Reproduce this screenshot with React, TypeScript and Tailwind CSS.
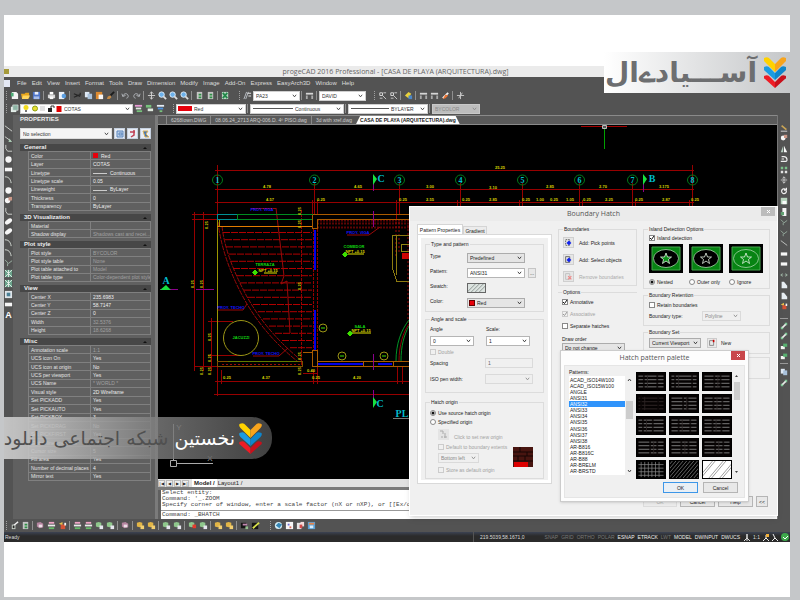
import React from 'react';

type Prop = [name: string, value: string, dim?: boolean];

interface ISection {
  title: string;
  height: string;
  rows: Prop[];
}

const sections: ISection[] = [
  {
    title: 'General',
    height: 'h-[60px]',
    rows: [
      ['Color', 'Red'],
      ['Layer', 'COTAS'],
      ['Linetype', 'Continuous'],
      ['Linetype scale', '0.05'],
      ['Lineweight', 'ByLayer'],
      ['Thickness', '0'],
      ['Transparency', 'ByLayer'],
    ],
  },
  {
    title: '3D Visualization',
    height: 'h-[17px]',
    rows: [
      ['Material', ''],
      ['Shadow display', 'Shadows cast and recei...', true],
    ],
  },
  {
    title: 'Plot style',
    height: 'h-[34px]',
    rows: [
      ['Plot style', 'BYCOLOR', true],
      ['Plot style table', 'None', true],
      ['Plot table attached to', 'Model', true],
      ['Plot table type', 'Color-dependent plot style', true],
    ],
  },
  {
    title: 'View',
    height: 'h-[43px]',
    rows: [
      ['Center X', '235.6983'],
      ['Center Y', '58.7147'],
      ['Center Z', '0'],
      ['Width', '32.5376', true],
      ['Height', '18.6268', true],
    ],
  },
  {
    title: 'Misc',
    height: 'h-[136px]',
    rows: [
      ['Annotation scale', '1:1', true],
      ['UCS icon On', 'Yes'],
      ['UCS icon at origin', 'No'],
      ['UCS per viewport', 'Yes'],
      ['UCS Name', '* WORLD *', true],
      ['Visual style', '2D Wireframe'],
      ['Set PICKADD', 'Yes'],
      ['Set PICKAUTO', 'Yes'],
      ['Set PICKBOX', '3'],
      ['Set PICKDRAG', 'No'],
      ['Set PICKFIRST', 'Yes'],
      ['Global linetype scale', '0.5'],
      ['Cursor size', '5'],
      ['Fill area', 'Yes'],
      ['Number of decimal places', '4'],
      ['Mirror text', 'Yes'],
    ],
  },
];

const menus = [
  'File', 'Edit', 'View', 'Insert', 'Format', 'Tools', 'Draw', 'Dimension',
  'Modify', 'Image', 'Add-On', 'Express', 'EasyArch3D', 'Window', 'Help',
];

const shapes: Record<string, React.ReactNode> = {
  page: (<><path d="M2 1h5l2 2v6H2z" fill="#f4f4f4" /><path d="M1 2h3v4H1z" fill="#4fae78" /></>),
  folder: (<><path d="M0 3h4l1-1h4v6H1z" fill="#e6a51c" /><path d="M2 5h8l-2 4H1z" fill="#ffd65e" /></>),
  disk: (<><path d="M1 1h8v8H1z" fill="#4d74c9" /><path d="M3 1h4v3H3z" fill="#e9eefb" /><path d="M2 6h6v3H2z" fill="#a8bdea" /></>),
  print: (<><path d="M3 1h4v3H3z" fill="#fff" /><path d="M1 4h8v4H1z" fill="#d5d5d5" /><path d="M3 6h4v3H3z" fill="#fafafa" /></>),
  preview: (<><path d="M1 1h6v8H1z" fill="#eaf1fa" /><circle cx="6.500" cy="5.500" r="2.500" fill="#5b9ee0" /></>),
  cut: (<path d="M1 3l7 3M1 7l7-3M8 2v3" stroke="#262626" strokeWidth="1.300" fill="none" />),
  copy: (<><path d="M1 1h5v6H1z" fill="#dfe9f5" /><path d="M4 3h5v6H4z" fill="#a9c2dc" /></>),
  paste: (<><path d="M1 1h7v8H1z" fill="#dd8a30" /><path d="M4 4h5v5H4z" fill="#f6f6f6" /></>),
  brush: (<><path d="M9 1L5 5" stroke="#1c1c1c" strokeWidth="2" /><path d="M1 9l1-3 3-1 1 2-2 2z" fill="#c78b45" /></>),
  undo: (<path d="M2 6c1-4 6-4 6 0 0 1-1 2-2 2M1 3l1 3 3-1" stroke="#b5b9be" fill="none" />),
  redo: (<path d="M8 6C7 2 2 2 2 6c0 1 1 2 2 2M9 3L8 6 5 5" stroke="#b5b9be" fill="none" />),
  pan: (<path d="M5 1v8M1 5h8M3 3l2-2 2 2M3 7l2 2 2-2" stroke="#d5d5d5" fill="none" />),
  zoom: (<><circle cx="4" cy="4" r="3" fill="#6db1ea" stroke="#e9f4ff" /><path d="M6 6l3 3" stroke="#dcdcdc" strokeWidth="2" /></>),
  tree: (<><path d="M2 1h6v8H2z" fill="#c5c5c5" /><path d="M4 3h3v2H4zM4 6h3v2H4z" fill="#2f9146" /></>),
  sheet: (<><path d="M1 1h7v8H1z" fill="#b9d6c2" /><path d="M2 2l5 6M7 2L2 8" stroke="#23884a" strokeWidth="2" /></>),
  style: (<><path d="M1 9l3-8M3 9l3-8" stroke="#bfc5cb" /><path d="M5 2h4v1H5zM6 5h3v1H6z" fill="#e3e3e3" /></>),
  ruler: (<><path d="M1 2h8v2H1z" fill="#d5d5d5" /><path d="M1 5h2v4H1zM7 5h2v4H7z" fill="#aaa" /></>),
  osnap: (<><path d="M2 2h3v3H2z" fill="none" stroke="#e0e0e0" /><path d="M5 5l4 4M6 2h3M2 8h3" stroke="#cfcfcf" /></>),
  gold: (<><path d="M1 5l4-4 3 2-3 5z" fill="#ead23b" /><path d="M5 5h4v4H5z" fill="#4c86c6" /></>),
  orange: (<><path d="M2 8l6-6" stroke="#f1f1f1" strokeWidth="2" /><path d="M5 4l3 1-3 3-3 1z" fill="#e87333" /></>),
  plus: (<path d="M5 1v8M1 5h8M3 8l4-6" stroke="#cbcbcb" fill="none" />),
  layers: (<><path d="M1 3h6v6H1z" fill="#e3eee9" /><path d="M3 1h6v6H3z" fill="#8fb6a6" stroke="#eee" strokeWidth=".600" /></>),
  layerPink: (<><path d="M1 1h8v2H1z" fill="#e79bd5" /><path d="M2 4h6v2H2z" fill="#dfe9df" /><path d="M3 7h6v2H3z" fill="#78c27d" /></>),
  layerGreen: (<><path d="M1 1h6v3H1z" fill="#78c27d" /><path d="M3 5h6v3H3z" fill="#dfe9df" /></>),
  layerBlue: (<><path d="M1 1h8v2H1z" fill="#e5ecf5" /><path d="M2 4h6v2H2z" fill="#4d91dc" /><path d="M4 7h3v2H4z" fill="#78c27d" /></>),
  solid: (<><path d="M1 2l3-1 3 1v4L4 7 1 6z" fill="#8fc78c" /><path d="M5 5h4v4H5z" fill="#e6e6ee" /></>),
  solidGold: (<><path d="M1 2l3-1 3 1v4L4 7 1 6z" fill="#e2b546" /><path d="M5 5h4v4H5z" fill="#f3cf70" /></>),
  solidPink: (<><path d="M1 2l4-1 3 2v4L4 8 1 6z" fill="#b4849f" /><path d="M3 4h4v3H3z" fill="#ecdfe6" /></>),
  solidRed: (<><path d="M1 2l3-1 3 1v4L4 7 1 6z" fill="#8fc78c" /><path d="M5 4h4v4H5z" fill="#e43b2e" /></>),
  bars: (<><path d="M2 1h6v2H2z" fill="#f0a6c7" /><path d="M1 4h8v2H1z" fill="#ebebeb" /><path d="M2 7h6v2H2z" fill="#68bb6a" /></>),
  check: (<><path d="M2 4h4v5H2z" fill="#cfd8cf" /><path d="M4 5l5-4" stroke="#eee" strokeWidth="1.500" /><path d="M3 5h2v3H3z" fill="#2b2b2b" /></>),
  dark: (<><path d="M1 2h6v6H1z" fill="#151515" /><path d="M3 3h5v2H3z" fill="#c187b0" /><path d="M6 6h3v3H6z" fill="#93bf8d" /></>),
  wand: (<><path d="M1 2h7v7H1z" fill="#151515" /><path d="M2 8l7-6" stroke="#d7e04b" strokeWidth="2" /></>),
  globe: (<><circle cx="5" cy="5" r="4" fill="#d5edf5" /><path d="M2 5l3-3 4 2-3 4z" fill="#3586b5" /></>),
  calendar: (<><path d="M1 1h8v8H1z" fill="#f7f7f7" /><path d="M3 3h2v2H3z" fill="#6b6bd8" /><path d="M5 6h2v2H5z" fill="#dd6655" /></>),
  redPage: (<><path d="M1 2h5v7H1z" fill="#e6e6e6" /><path d="M5 1h4v5H5z" fill="#f4dcdc" /><path d="M4 4h3v4H4z" fill="#d34a4a" /></>),
  help: (<><path d="M1 1h8v8H1z" fill="#5ba0d4" /><path d="M2 2h6v2H2z" fill="#e8854b" /><path d="M3 5h4v3H3z" fill="#d9ecfb" /></>),
  line: (<path d="M1 2l8 6" stroke="#d5d8d5" />),
  arrow: (<><path d="M1 3l7 5" stroke="#d5d8d5" /><path d="M6 5l3 4H5z" fill="#aac9b3" /></>),
  poly: (<path d="M2 1v4l2 3h5" stroke="#d5d8d5" fill="none" />),
  disc: (<circle cx="5" cy="5" r="3.500" fill="#f6f6f6" />),
  rect: (<path d="M1 3h8v4H1z" fill="#f6f6f6" />),
  arc: (<path d="M1 2c4 0 6 2 7 7" stroke="#dfe5df" fill="none" />),
  revcloud: (<><circle cx="4" cy="5" r="3" fill="#f6f6f6" /><path d="M5 1h4v4H5z" fill="#c99686" /></>),
  ellipse: (<ellipse cx="5" cy="5" rx="4.500" ry="2.500" fill="#f6f6f6" transform="rotate(-35 5 5)" />),
  hatch: (<><path d="M1 1h8v8H1z" fill="#6aa38b" /><path d="M1 1l8 8M9 1L1 9M5 1v8" stroke="#e5efe9" /></>),
  table: (<><path d="M1 1h8v8H1z" fill="#dfe5ea" /><path d="M3 3h4v4H3z" fill="#4b8096" /></>),
  pencil: (<><path d="M1 9h8" stroke="#eee" /><path d="M2 2l6 5" stroke="#c9a455" strokeWidth="2" /></>),
  mirror: (<><path d="M5 1l4 8H5z" fill="#fafafa" /><path d="M4 1v8H1z" fill="#b5cdbf" /></>),
  offset: (<path d="M1 8h6c3 0 2-6-2-6H2M2 5h3" stroke="#f0f0f0" strokeWidth="1.500" fill="none" />),
  array: (<><path d="M1 1h3v3H1zM6 1h3v3H6z" fill="#7cc08a" /><path d="M1 6h3v3H1zM6 6h3v3H6z" fill="#e3e3e3" /></>),
  rotate: (<path d="M8 5a3 3 0 1 1-1-2M8 1v3H5" stroke="#f0f0f0" strokeWidth="1.500" fill="none" />),
  scale: (<><path d="M1 1h8v8H1z" fill="#b7d4be" /><path d="M3 5h5v4H3z" fill="#fafafa" /></>),
  stretch: (<><path d="M3 0h5v10H3z" fill="#f4f4f4" /><path d="M1 5h4v4H1z" fill="#5f9e70" /></>),
  trim: (<path d="M1 2l4 4 4-3M4 6v3" stroke="#9fb8a8" fill="none" />),
  join: (<path d="M1 5h3M6 5h3M3 3L1 5l2 2M7 3l2 2-2 2" stroke="#a9c2b0" fill="none" />),
  chamfer: (<path d="M2 1h3l4 5v3H2z" fill="#e7edf2" />),
  bomb: (<><path d="M1 3l4-2v4z" fill="#e7c04c" /><path d="M3 4h5v5H3z" fill="#d55335" /><path d="M7 2h2v3H7z" fill="#f6f6f6" /></>),
  nodes: (<><path d="M1 6h3v3H1zM6 1h3v3H6z" fill="#7fc796" /><path d="M3 7l4-4" stroke="#e9e9e9" strokeWidth="2" /></>),
  front: (<><path d="M1 5h5v4H1z" fill="#f4f4f4" /><path d="M4 2h5v4H4z" fill="#58b070" /></>),
};

const Glyph: React.FC<{ name: string; size?: string }> = ({ name, size = 'size-[10px]' }) => {
  if (name === 'A') {
    return <span className="text-[9px] leading-[10px] font-bold text-white">A</span>;
  }
  return (
    <svg viewBox="0 0 10 10" className={`${size} shrink-0`} aria-hidden="true">
      {shapes[name]}
    </svg>
  );
};

const Sep = () => <span className="mx-px h-[9px] w-[2px] shrink-0 border-l border-[#8f8f8f]" />;
const Grip = () => <span className="mx-[2px] h-[9px] w-px shrink-0 border-l border-dotted border-[#a0a0a0]" />;

const IconStrip: React.FC<{ items: string[] }> = ({ items }) => (
  <>
    {items.map((name, i) => {
      if (name === '|') return <Sep key={i} />;
      if (name === ':') return <Grip key={i} />;
      return (
        <button key={i} aria-label={name} className="flex h-[11px] w-[11px] shrink-0 items-center justify-center">
          <Glyph name={name} size="size-[9px]" />
        </button>
      );
    })}
  </>
);

interface IPicker {
  label: string;
  value: string;
  className: string;
  disabled?: boolean;
  lead?: React.ReactNode;
}

const Picker: React.FC<IPicker> = ({ label, value, className, disabled, lead }) => (
  <span className={`relative flex h-[10px] shrink-0 items-center overflow-hidden border ${className}`}>
    {lead}
    <select
      aria-label={label}
      disabled={disabled}
      className="h-full min-w-0 flex-1 appearance-none bg-transparent pl-[2px] text-[5px] leading-[8px] outline-none"
    >
      <option>{value}</option>
    </select>
    <svg viewBox="0 0 6 4" className="mr-[2px] h-1 w-[5px] shrink-0">
      <path d="M1 .5l2 2.500 2-2.500" fill="none" stroke="currentColor" />
    </svg>
  </span>
);

const barPicker = 'border-[#cfcfcf] bg-white text-[#333]';
const greyPicker = 'border-[#acacac] bg-[#e5e5e5] text-[#222]';
const whitePicker = 'border-[#b5b5b5] bg-white text-[#222]';
const offPicker = 'border-[#dadada] bg-[#efefef] text-[#888]';

const PropertiesPanel = () => (
  <aside className="flex w-[142px] shrink-0 flex-col bg-[#606060] pr-1 pl-[7px]">
    <h2 className="text-[6px] leading-[9px] font-bold text-[#eee]">PROPERTIES</h2>
    <div className="mt-1 mb-[5px] flex items-center gap-[2px]">
      <Picker label="Selection" value="No selection" className="h-[11px] flex-1 border-[#ddd] bg-[#f5f5f5] text-[#333]" />
      {['table', 'arrow', 'gold'].map((name, i) => (
        <button key={name} aria-label={name} className="flex h-[11px] w-[11px] items-center justify-center border border-[#c5d0df] bg-[#e8edf5]">
          <svg viewBox="0 0 8 8" className="size-2">
            {i === 0 && <path d="M1 1h6v6H1zM3 3h3v2H3z" stroke="#5b86bd" fill="#bed1ea" />}
            {i === 1 && <path d="M5 0v5l-3 2M1 2h5" stroke="#c04055" strokeWidth="1.500" fill="none" />}
            {i === 2 && <path d="M1 1h5L4 4l3 3H3z" fill="#4577b2" stroke="#dbb25a" />}
          </svg>
        </button>
      ))}
    </div>
    <div className="flex flex-col gap-[3px]">
      {sections.map(({ title, height, rows }) => (
        <section key={title}>
          <h3 className="flex h-[7px] items-center justify-between bg-[#474747] px-1 text-[6px] leading-[7px] font-bold text-[#eee]">
            {title}
            <svg viewBox="0 0 4 4" className="size-1"><path d="M0 3l2-2 2 2z" fill="#111" /></svg>
          </h3>
          <table className={`ml-2 w-[123px] table-fixed border-collapse text-[5px] leading-[6px] ${height}`}>
            <tbody>
              {rows.map(([name, value, dim]) => (
                <tr key={name} className="border border-[#808080]">
                  <th scope="row" className="w-[62px] border-r border-[#808080] p-0 pl-[2px] text-left font-normal whitespace-nowrap text-[#e5e5e5]">{name}</th>
                  <td className={`overflow-hidden p-0 pl-[2px] whitespace-nowrap ${dim ? 'text-[#a0a0a0]' : 'text-[#eee]'}`}>
                    {name === 'Color' && <span className="mr-[3px] inline-block size-[5px] bg-red-600" />}
                    {(name === 'Linetype' || name === 'Lineweight') && (
                      <span className="mr-[3px] inline-block w-[14px] border-t border-[#ccc] align-middle" />
                    )}
                    {value}
                  </td>
                </tr>
              ))}
            </tbody>
          </table>
        </section>
      ))}
    </div>
  </aside>
);

const axes: [number, string][] = [
  [217, '1'], [314, '2'], [399, '3'], [460, '4'], [522, '5'], [579, '6'], [632, '7'], [692, '8'],
];

const dims: [number, number, string][] = [
  [500, 169, '25.25'], [267, 188, '4.78'], [358, 188, '4.65'], [430, 188, '3.00'], [493, 189, '3.10'],
  [550, 188, '2.85'], [603, 188, '2.70'], [664, 188, '3.175'], [270, 201, '4.57'], [321, 201, '0.25'],
  [359, 201, '3.80'], [403, 201, '0.25'], [430, 201, '2.55'], [466, 201, '0.25'], [493, 201, '2.85'],
  [526, 201, '0.25'], [540, 201, '1.00'], [554, 201, '0.25'], [570, 201, '1.05'], [587, 201, '0.25'],
  [609, 201, '2.25'], [639, 201, '0.25'], [666, 201, '2.87'], [695, 201, '0.25'], [227, 379, '0.25'],
  [266, 379, '4.37'], [316, 379, '0.25'], [357, 379, '4.20'], [311, 372, '0.40'],
];

const sideDims: [number, number][] = [
  [206, 225], [192, 284], [201, 284], [299, 211], [299, 224], [299, 286], [209, 337],
  [209, 358], [201, 371], [209, 371], [299, 356], [299, 371],
];

// plan of the house, in window coordinates
const Drawing = () => (
  <svg viewBox="158 125 619 354" preserveAspectRatio="xMinYMin slice" className="block h-[354px] w-full bg-black">
    <g stroke="#970000" fill="none" shapeRendering="crispEdges">
      <path d="M215 170.500H694M215 189.500H694M215 202.500H694" />
      <path d="M217.500 165v50M314.500 183v32M312.500 200v15M317.500 200v15M399.500 183v32M396.500 200v20M460.500 183v25M457.500 200v8M522.500 183v25M519.500 200v8M579.500 183v25M582.500 200v8M632.500 183v25M635.500 200v8M692.500 165v43M689.500 200v8" />
      <path d="M194.500 212V371M203.500 212V371M211.500 318V371M192 214.500H217M192 219.500H217M194 366.500H217" />
      <path d="M301.500 210V367M313.500 229V350M317.500 229V361" strokeDasharray="3 1" />
      <path d="M208 321.500H233M208 355.500H240M217.500 366V396M221.500 370v14M313.500 370v14M317.500 367v17M397.500 367v17M402.500 367v17" />
      <path d="M215 381.500H409M214 394.500H409M303 373.500h14" />
    </g>
    <g stroke="#b00000">
      {Array.from({ length: 17 }, (_, i) => {
        const y = 232.5 + i * 7.2;
        const start = [223, 225, 226, 229, 231, 233, 237, 240, 244, 248, 253, 258, 263, 269, 275, 282, 290][i];
        return <path key={i} d={`M${start} ${y}H312`} strokeDasharray="7 1" />;
      })}
    </g>
    <g stroke="#9b0909" fill="none">
      <path d="M222 226Q225 255 245 293T302 361" strokeDasharray="5 1" />
      <path d="M218 222Q222 257 242 295T297 361" strokeDasharray="5 1" />
      <path d="M276 208L284 276l-3 8 6-3 3 52M217 310h26l4-6M253 356h26l9-8M251 208.500h25M347 235h22l11-8" />
      <path d="M317 223.500H409M317 227.500H409M317 220.500H409" strokeDasharray="2 1" strokeWidth="2" opacity=".6" />
      <path d="M222 364.500H301" strokeDasharray="2 2" />
      <path d="M396 222v36M399 222v30M408 225v100" strokeDasharray="2 2" />
    </g>
    <g fill="none" shapeRendering="crispEdges">
      <path d="M217.500 219V366M219.500 220v6" stroke="#9c9600" />
      <path d="M217 214.500h20v5h-20z" stroke="#008f94" />
      <path d="M237 214.500h75v5h-75z" stroke="#008b20" />
      <path d="M217 226.500H312" stroke="#e07b00" />
      <path d="M217 361.500h85v5h-85z" stroke="#805000" />
      <path d="M228 361.500h70" stroke="#5f7c00" />
      <path d="M312.500 214.500H409M317 219.500H409M312.500 214.500v14h5v-9M312.500 350.500h5v16h-5zM302.500 352.500h10v14M317 361.500H409M317 366.500H409M363.500 361v5M393.500 361v5" stroke="#aa5b00" />
      <path d="M392 235.500H409M396.500 235v40M408.500 281h-12l-4-13V235" stroke="#8d7b10" />
      <path d="M401.500 244.500h8v7h-8z" stroke="#928611" />
      <path d="M402 253h7v6h-7z" fill="#cd0505" />
      <path d="M314.500 230V270M314.500 310V350M318 364H363M378 364h14" stroke="#0000e8" strokeWidth="2" />
    </g>
    <g stroke="#9c9616" fill="none">
      <circle cx="241" cy="338" r="17.500" />
      <circle cx="323" cy="328" r="4" />
      <circle cx="342" cy="356" r="4" />
      <circle cx="384" cy="356" r="4" />
      <path d="M264 273h13M348 254h16M352 333h19" stroke="#e4e400" />
    </g>
    <path d="M396 361c0-17 5-31 13-41M401 361c0-15 3-26 8-35" stroke="#009426" fill="none" />
    <path d="M399 361c0-15 4-29 10-37" stroke="#8f0505" fill="none" />
    <path d="M160 289.500h18M196 289.500h18M373.500 182v9M373.500 211v16M373.500 354v16M373.500 390v9M643.500 182v10" stroke="#8c008c" />
    <path d="M160 290l6-5 5 5zM373 174l4 5-4 6zM643 174l4 5-4 6zM373 397l4 5-4 6z" fill="#18e13f" />
    <path d="M255 270l2.500 2.500-2.500 2.500-2.500-2.500zM345 252l2.500 2.500-2.500 2.500-2.500-2.500zM350 331l2.500 2.500-2.500 2.500-2.500-2.500zM321 328h4M340 356h4M382 356h4" fill="#3de000" stroke="#3de000" />
    <path d="M581 126.500h46" stroke="#a40000" />
    <path d="M604.500 128v21" stroke="#00a000" />
    <path d="M602.500 125.500h4v3h-4z" fill="#555" stroke="#bbb" />
    <path d="M173.500 424v36M177 463.500h36M170.500 460.500h6v6h-6z" stroke="#aaa" fill="none" />
    <path d="M393 418.500h16" stroke="#777" />
    <g fontFamily="'Liberation Sans', sans-serif" textAnchor="middle">
      {axes.map(([x, n]) => (
        <g key={n}>
          <circle cx={x + 0.5} cy="180" r="5" fill="none" stroke="#007c18" />
          <text x={x + 0.5} y="183" fontSize="8" fontWeight="bold" fill="#00c5d0" fontFamily="'Liberation Serif', serif">{n}</text>
        </g>
      ))}
      <g fill="#d8d400" fontSize="4" fontWeight="bold">
        {dims.map(([x, y, t]) => <text key={`${x}-${y}`} x={x} y={y}>{t}</text>)}
        {sideDims.map(([x, y]) => <text key={`${x}-${y}`} transform={`translate(${x + 2} ${y}) rotate(-90)`}>0.25</text>)}
        <text x="268" y="272">NPT +0.15</text>
        <text x="355" y="253">NPT +0.15</text>
        <text x="361" y="332">NPT +0.15</text>
      </g>
      <g fill="#12d912" fontSize="4" fontWeight="bold">
        <text x="265" y="266">TERRAZA</text>
        <text x="354" y="248">COMEDOR</text>
        <text x="360" y="328">SALA</text>
        <text x="241" y="339">JACUZZI</text>
      </g>
      <g fill="#1616ff" fontSize="4" fontWeight="bold">
        <text x="262" y="211">PROY. VIGA</text>
        <text x="358" y="234">PROY. VIGA</text>
        <text x="231" y="309">PROY. TECHO</text>
        <text x="266" y="355">PROY. TECHO</text>
      </g>
      <g fill="#00bccb" fontSize="10" fontFamily="'Liberation Serif', serif" fontWeight="bold">
        <text x="381" y="182">C</text>
        <text x="652" y="182">B</text>
        <text x="166" y="284">A</text>
        <text x="380" y="407">C</text>
        <text x="402" y="417">PL</text>
      </g>
      <g fill="#aaa" fontSize="8">
        <text x="179" y="430">Y</text>
        <text x="210" y="461">X</text>
      </g>
    </g>
  </svg>
);

interface ITick {
  type?: 'checkbox' | 'radio';
  name?: string;
  label: string;
  on?: boolean;
  disabled?: boolean;
}

const Tick: React.FC<ITick> = ({ type = 'checkbox', name, label, on, disabled }) => (
  <label className={`flex h-[7px] items-center gap-[2px] whitespace-nowrap ${disabled ? 'text-[#a2a2a2]' : ''}`}>
    <span className="relative flex size-[6px] shrink-0">
      <input
        type={type}
        name={name}
        defaultChecked={on}
        disabled={disabled}
        className={`peer size-[6px] appearance-none border border-[#888] bg-white disabled:border-[#ccc] disabled:bg-transparent ${type === 'radio' ? 'rounded-full' : ''}`}
      />
      <svg viewBox="0 0 6 6" className="pointer-events-none absolute inset-0 hidden peer-checked:block">
        {type === 'radio' ? <circle cx="3" cy="3" r="1.500" fill="#111" /> : <path d="M1 3l1.500 1.500L5 1" stroke={disabled ? '#999' : '#111'} fill="none" />}
      </svg>
    </span>
    {label}
  </label>
);

const Group: React.FC<{ title: string; className?: string; children?: React.ReactNode }> = ({ title, className = '', children }) => (
  <fieldset className={`min-w-0 border border-[#dcdcdc] px-1 ${className}`}>
    <legend className="h-[6px] px-px leading-[6px]">{title}</legend>
    {children}
  </fieldset>
);

const PatternTab = () => (
  <div className="flex w-[135px] shrink-0 flex-col">
    <div role="tablist" className="flex items-end">
      <button role="tab" aria-selected="true" className="h-[10px] w-[46px] border border-b-0 border-[#d5d5d5] bg-white whitespace-nowrap">Pattern Properties</button>
      <button role="tab" className="h-2 w-[24px] border border-b-0 border-[#d5d5d5] bg-[#ececec]">Gradient</button>
    </div>
    <div className="border border-[#d9d9d9] bg-white p-[3px]">
      <div className="bg-[#f0f0f0] px-1 pt-[3px] pb-px">
        <Group title="Type and pattern" className="pb-[3px]">
          <div className="flex flex-col gap-[5px] pt-[6px]">
            <div className="flex"><span className="w-[37px]">Type</span><Picker label="Type" value="Predefined" className={`w-[58px] ${greyPicker}`} /></div>
            <div className="flex">
              <span className="w-[37px]">Pattern:</span>
              <Picker label="Pattern" value="ANSI31" className={`w-[58px] ${whitePicker}`} />
              <button className="ml-[3px] h-[10px] w-2 border border-[#c5c5c5] bg-[#e8e8e8] leading-[5px]">...</button>
            </div>
            <div className="flex">
              <span className="w-[37px]">Swatch:</span>
              <svg viewBox="0 0 19 10" className="h-[10px] w-[19px] border border-[#666] bg-[#dce3e0]">
                <path d="M-2 10L8 0M3 10L13 0M8 10L18 0M13 10L23 0" stroke="#7e8784" />
              </svg>
            </div>
            <div className="flex"><span className="w-[37px]">Color:</span><Picker label="Color" value="Red" className={`w-[58px] ${greyPicker}`} lead={<span className="ml-px size-[6px] border border-[#600] bg-red-600" />} /></div>
          </div>
        </Group>
        <Group title="Angle and scale" className="mt-[4px] pb-2">
          <div className="flex gap-3 pt-1">
            <div className="flex w-[44px] flex-col gap-1"><span>Angle</span><Picker label="Angle" value="0" className={whitePicker} /></div>
            <div className="flex w-[44px] flex-col gap-1"><span>Scale:</span><Picker label="Scale" value="1" className={whitePicker} /></div>
          </div>
          <div className="pt-[2px] pb-[3px]"><Tick label="Double" disabled /></div>
          <label className="flex items-center"><span className="w-[55px]">Spacing</span><input disabled defaultValue="1" className="h-[10px] w-[48px] border border-[#dadada] pl-[2px] text-[#666]" /></label>
          <div className="mt-[6px] flex items-center"><span className="w-[55px]">ISO pen width:</span><Picker label="ISO pen width" value="" disabled className={`w-[48px] ${offPicker}`} /></div>
        </Group>
        <Group title="Hatch origin" className="mt-[6px] pb-[5px]">
          <div className="flex flex-col gap-[2px] pt-[4px]">
            <Tick type="radio" name="origin" label="Use source hatch origin" on />
            <Tick type="radio" name="origin" label="Specified origin" />
          </div>
          <div className="mt-1 flex items-end justify-between">
            <div className="flex flex-col gap-[3px] pl-2 text-[#a2a2a2]">
              <button disabled className="flex items-end gap-[5px]">
                <svg viewBox="0 0 11 11" className="size-[11px] bg-[#e4e4e4]"><path d="M2 2h3v3M3 8h2M7 4v5M6 8h3" stroke="#aaa" fill="none" /></svg>
                Click to set new origin
              </button>
              <Tick label="Default to boundary extents" disabled />
              <Picker label="Corner" value="Bottom left" disabled className={`w-[41px] ${offPicker}`} />
              <Tick label="Store as default origin" disabled />
            </div>
            <svg viewBox="0 0 20 20" className="mr-[6px] mb-[6px] size-[20px] shrink-0">
              <path d="M0 0h20v20H0z" fill="#481510" />
              <path d="M0 5h20M0 9h20M0 14h20M7 0v5M14 5v4M5 9v5M12 9v5" stroke="#160605" />
              <path d="M1 15h14v5H1z" fill="#dc0000" />
            </svg>
          </div>
        </Group>
      </div>
    </div>
  </div>
);

const HatchStyle: React.FC<{ mode: 'nested' | 'outer' | 'ignore' }> = ({ mode }) => (
  <svg viewBox="0 0 34 29" className="h-[29px] w-[34px]">
    <path d="M0 0h34v29H0z" fill="#000" />
    <path d="M3 3h28v23H3z" fill="#078413" stroke="#47a44e" />
    <ellipse cx="17" cy="14.500" rx="12.500" ry="9" fill={mode === 'ignore' ? '#078413' : '#000'} stroke="#a7d3aa" strokeWidth=".800" />
    <path d="M17 9l1.500 4h4l-3 2.500 1 4-3.500-2.500-3.500 2.500 1-4-3-2.500h4z" fill={mode === 'outer' ? '#000' : '#0b8e18'} stroke="#e6f2e6" strokeWidth=".800" />
  </svg>
);

const boundaryActions = ['Add: Pick points', 'Add: Select objects', 'Remove boundaries'];

const patterns = [
  'ACAD_ISO14W100', 'ACAD_ISO15W100', 'ANGLE', 'ANSI31', 'ANSI32', 'ANSI33', 'ANSI34', 'ANSI35',
  'ANSI36', 'ANSI37', 'ANSI38', 'AR-B816', 'AR-B816C', 'AR-B88', 'AR-BRELM', 'AR-BRSTD',
];

const tileBars = [
  [7, 22], [5, 24], [12, 19], [4, 23], [14, 19], [11, 21], [6, 17], [9, 22], [10, 20], [14, 22], [12, 20], [13, 22],
];

const Tile: React.FC<{ index: number }> = ({ index }) => {
  const frame = 'h-[19px] w-[30px] border border-black';
  if (index === 14) {
    return (
      <svg viewBox="0 0 30 19" className={`${frame} bg-white`}>
        <path d="M-6 19L10 0M-3 19L13 0M6 19L22 0M9 19L25 0M18 19L34 0M21 19L37 0" stroke="#777" strokeWidth=".800" />
      </svg>
    );
  }
  if (index === 13) {
    return (
      <svg viewBox="0 0 30 19" className={`${frame} bg-black`}>
        {Array.from({ length: 12 }, (_, i) => <path key={i} d={`M${i * 4 - 14} 19L${i * 4 + 2} 0`} stroke="#8a8a8a" strokeWidth=".800" />)}
      </svg>
    );
  }
  if (index === 12) {
    return (
      <svg viewBox="0 0 30 19" className={`${frame} bg-black`}>
        <path d="M4 1v17M8 1v17M12 1v17M16 1v17M20 1v17M24 1v17M1 4h28M1 8h28M1 12h28M1 16h28" stroke="#8a8a8a" strokeWidth=".800" />
      </svg>
    );
  }
  const [a, b] = tileBars[index];
  return (
    <svg viewBox="0 0 30 19" className={`${frame} bg-[#050202]`}>
      <path d="M1 3.500h28M1 7.500h28M1 11.500h28M1 15.500h28" stroke={index === 3 ? '#332b2b' : '#888'} />
      <path d={`M${a} 0v19M${b} 0v19`} stroke="#0a0606" strokeWidth="2" opacity=".8" />
      <path d={`M${a + 4} 2v15`} stroke="#2a2424" />
    </svg>
  );
};

const PatternPalette = () => (
  <div role="dialog" aria-label="Hatch pattern palette" className="absolute top-[143px] left-[150px] w-[189px] border border-[#ccc] bg-[#fdfdfd] px-[3px] pb-[3px] shadow">
    <div className="flex h-[14px] items-start">
      <h2 className="flex-1 pl-[14px] text-center font-['Open_Sans',sans-serif] text-[7px] leading-[13px] text-[#555]">Hatch pattern palette</h2>
      <button aria-label="Close" className="flex h-[9px] w-[14px] items-center justify-center bg-[#c9474b]">
        <svg viewBox="0 0 5 5" className="size-[5px]"><path d="M1 1l3 3M4 1L1 4" stroke="#fff" /></svg>
      </button>
    </div>
    <div className="border border-[#e5e5e5] bg-[#f0f0f0] px-[4px] pt-[3px] pb-[4px]">
      <div className="flex">
        <div className="w-[64px]">
          <div id="patterns" className="pb-px leading-[6px]">Patterns:</div>
          <div className="flex bg-white">
            <ul role="listbox" aria-labelledby="patterns" className="flex h-[99px] flex-1 flex-col justify-between overflow-hidden py-px">
              {patterns.map((p) => (
                <li key={p} role="option" aria-selected={p === 'ANSI32'} className={`pl-px leading-[6px] ${p === 'ANSI32' ? 'bg-[#2f93fb] text-white' : ''}`}>{p}</li>
              ))}
            </ul>
            <div className="flex w-2 flex-col items-center justify-between bg-[#f0f0f0] py-[2px]">
              <svg viewBox="0 0 5 4" className="h-1 w-[5px]"><path d="M1 3l1.500-2L4 3" stroke="#444" fill="none" /></svg>
              <span className="-mt-8 h-[18px] w-[7px] bg-[#cdcdcd]" />
              <svg viewBox="0 0 5 4" className="h-1 w-[5px]"><path d="M1 1l1.500 2L4 1" stroke="#444" fill="none" /></svg>
            </div>
          </div>
        </div>
        <div className="ml-[3px] grid grid-cols-3 gap-x-[3px] gap-y-[3px] pt-[3px]">
          {Array.from({ length: 15 }, (_, i) => <Tile key={i} index={i} />)}
        </div>
        <div className="ml-px flex flex-1 flex-col items-center justify-between py-[5px]">
          <svg viewBox="0 0 5 4" className="h-1 w-[5px]"><path d="M1 3l1.500-2L4 3z" fill="#444" /></svg>
          <span className="-mt-[66px] h-[18px] w-[6px] bg-[#cdcdcd]" />
          <svg viewBox="0 0 5 4" className="h-1 w-[5px]"><path d="M1 1l1.500 2L4 1z" fill="#444" /></svg>
        </div>
      </div>
      <div className="mt-[3px] flex justify-end gap-[5px] pr-[2px]">
        <button className="h-[11px] w-[35px] border border-[#3c96e8] bg-[#e9eff5]">OK</button>
        <button className="h-[11px] w-[35px] border border-[#b5b5b5] bg-[#e8e8e8]">Cancel</button>
      </div>
    </div>
  </div>
);

const BoundaryHatch = () => (
  <div role="dialog" aria-label="Boundary Hatch" className="absolute top-[140px] left-[405px] w-[369px] border border-white bg-[#f0f0f0] text-[5px] leading-[6px] text-[#222] shadow-md">
    <div className="flex h-[14px] items-start bg-[#ebebeb]">
      <h2 className="flex-1 pl-4 text-center font-['Open_Sans',sans-serif] text-[7px] leading-[13px] text-[#555]">Boundary Hatch</h2>
      <button aria-label="Close" className="mr-[2px] flex h-[9px] w-[14px] items-center justify-center bg-[#bcbcbc]">
        <svg viewBox="0 0 5 5" className="size-[5px]"><path d="M1 1l3 3M4 1L1 4" stroke="#fff" /></svg>
      </button>
    </div>
    <div className="flex gap-[6px] px-[7px] pt-[3px]">
      <PatternTab />
      <div className="flex w-[79px] shrink-0 flex-col pt-[2px]">
        <Group title="Boundaries" className="pb-[3px]">
          <div className="flex flex-col gap-[6px] pt-[5px]">
            {boundaryActions.map((text, i) => (
              <button key={text} disabled={i === 2} className="flex items-center gap-[5px] text-left whitespace-nowrap disabled:text-[#aaa]">
                <svg viewBox="0 0 11 11" className="size-[11px] shrink-0 border border-[#cfcfcf] bg-[#e6e6e6]">
                  <path d="M2 2h5v7H2z" fill="none" stroke={i === 2 ? '#bbb' : '#555'} strokeDasharray={i === 0 ? '2 1' : undefined} />
                  {i === 2 ? <path d="M5 5l4 4M9 5L5 9" stroke="#ee8888" strokeWidth="1.500" /> : <path d="M6 3l3 3-3 3-3-3z" fill="#1122ee" />}
                </svg>
                {text}
              </button>
            ))}
          </div>
        </Group>
        <div className="mt-[3px]">
          <Group title="Options" className="border-x-0 border-b-0">
            <div className="flex flex-col gap-[5px] pt-[3px]">
              <Tick label="Annotative" on />
              <Tick label="Associative" on disabled />
              <Tick label="Separate hatches" />
            </div>
            <div className="mt-[7px]">Draw order</div>
            <Picker label="Draw order" value="Do not change" className={`mt-px w-[63px] ${greyPicker}`} />
          </Group>
        </div>
      </div>
      <div className="flex min-w-0 flex-1 flex-col gap-[3px] pt-[2px]">
        <Group title="Island Detection Options" className="pb-[3px]">
          <div className="flex flex-col gap-[3px] pt-[2px] pl-px">
            <Tick label="Island detection" on />
            <div className="flex gap-[6px]">
              <HatchStyle mode="nested" />
              <HatchStyle mode="outer" />
              <HatchStyle mode="ignore" />
            </div>
            <div className="mt-[2px] grid grid-cols-[40px_40px_34px]">
              <Tick type="radio" name="island" label="Nested" on />
              <Tick type="radio" name="island" label="Outer only" />
              <Tick type="radio" name="island" label="Ignore" />
            </div>
          </div>
        </Group>
        <Group title="Boundary Retention" className="pb-[4px]">
          <div className="pt-[3px] pl-px"><Tick label="Retain boundaries" /></div>
          <div className="mt-[3px] flex items-center pl-px"><span className="w-[53px]">Boundary type:</span><Picker label="Boundary type" value="Polyline" disabled className={`w-[39px] ${offPicker}`} /></div>
        </Group>
        <Group title="Boundary Set" className="pb-[5px]">
          <div className="flex items-center pt-[3px] pl-px">
            <Picker label="Boundary set" value="Current Viewport" className={`w-[52px] ${greyPicker}`} />
            <button className="ml-[6px] flex items-center gap-1">
              <svg viewBox="0 0 10 10" className="size-[10px] border border-[#ccc] bg-[#e9e9e9]"><path d="M2 2h5v6H2z" fill="none" stroke="#777" /><path d="M6 1h2v3H6z" fill="#c00" /></svg>
              New
            </button>
          </div>
        </Group>
        <fieldset aria-label="Gap tolerance" className="h-[22px] border border-[#dcdcdc]" />
      </div>
    </div>
    <div className="mt-[12px] mb-2 flex justify-end gap-[3px] pr-[9px]">
      <button disabled className="h-[11px] w-[34px] border border-[#dcdcdc] bg-[#ececec] text-[#aaa]">OK</button>
      <button className="h-[11px] w-[35px] border border-[#b5b5b5] bg-[#e8e8e8]">Cancel</button>
      <button className="h-[11px] w-[35px] border border-[#b5b5b5] bg-[#e8e8e8]">Help</button>
      <button className="h-[11px] w-[12px] border border-[#b5b5b5] bg-[#e8e8e8]">&lt;&lt;</button>
    </div>
    <PatternPalette />
  </div>
);

const Chevrons: React.FC<{ className: string }> = ({ className }) => (
  <svg viewBox="0 0 22 31" className={className} aria-hidden="true">
    <path d="M0 1Q4-1 6 2l5 5v8L1 5Q-1 3 0 1z" fill="#ffd200" />
    <path d="M22 1Q18-1 16 2l-5 5v8L21 5Q23 3 22 1z" fill="#f7a41d" />
    <path d="M0 10Q4 8 6 11l5 5v7L1 14Q-1 12 0 10z" fill="#1b9ce2" />
    <path d="M22 10Q18 8 16 11l-5 5v7L21 14Q23 12 22 10z" fill="#0e86cc" />
    <path d="M0 19Q4 17 6 20l5 5v6L1 22Q-1 21 0 19z" fill="#ee1c25" />
    <path d="M22 19Q18 17 16 20l-5 5v6L21 22Q23 21 22 19z" fill="#c8101c" />
  </svg>
);

const modes: [string, boolean][] = [
  ['SNAP', false], ['GRID', false], ['ORTHO', false], ['POLAR', false], ['ESNAP', true],
  ['ETRACK', true], ['LWT', false], ['MODEL', true], ['DWINPUT', true], ['DWUCS', true],
];

const drawTools = ['line', 'arrow', 'poly', 'disc', 'rect', 'arc', 'disc', 'revcloud', 'poly', 'ellipse', 'ellipse', 'arc', 'arc', 'trim', 'hatch', 'hatch', 'table', 'rect', 'A'];
const editTools = ['pencil', 'revcloud', 'mirror', 'offset', 'array', 'pan', 'rotate', 'scale', 'stretch', 'trim', 'trim', 'line', 'rect', 'rect', 'join', 'chamfer', 'chamfer', 'bomb'];
const orderTools = ['nodes', 'nodes', 'front', 'front'];

export default function App() {
  return (
    <div className="min-h-screen bg-[#c5c7c9] pt-[15px] pr-[10px] pb-[3px] pl-1 font-['Liberation_Sans',sans-serif]">
      <div className="relative flex min-h-[582px] flex-col bg-white pt-[51px]">
        <main className="relative flex flex-col bg-[#535353]">
          <header className="flex h-[11px] items-center bg-[#ebebeb] pr-2">
            <span className="size-[5px] bg-[#a59a3a]" />
            <h1 className="flex-1 text-center font-['Open_Sans',sans-serif] text-[7px] leading-[11px] text-[#666]">
              progeCAD 2016 Professional - [CASA DE PLAYA (ARQUITECTURA).dwg]
            </h1>
          </header>
          <nav className="flex h-[12px] items-center gap-[5px] text-[6px] leading-[12px] text-[#ddd]">
            <span className="mr-[2px] h-[7px] w-[6px] bg-[#e4e8f4]" />
            {menus.map((m) => <a key={m} href="#" className="whitespace-nowrap">{m}</a>)}
          </nav>
          <div className="flex h-[13px] items-center">
            <IconStrip items={[':', 'page', 'folder', 'disk', '|', 'print', 'preview', '|', 'cut', 'copy', 'paste', 'brush', '|', 'undo', 'redo', '|', 'pan', 'zoom', 'zoom', 'zoom', '|', 'tree', 'tree', '|', 'sheet']} />
            <span className="w-[6px]" />
            <IconStrip items={[':', 'style']} />
            <Picker label="Text style" value="PA23" className={`w-[47px] ${barPicker}`} />
            <IconStrip items={['|', 'ruler', '|']} />
            <Picker label="Dimension style" value="DAVID" className={`w-[47px] ${barPicker}`} />
            <span className="w-[6px]" />
            <IconStrip items={[':', 'osnap', 'osnap', '|', 'gold', '|', 'ruler', 'ruler', 'orange', '|', 'plus']} />
          </div>
          <div className="flex h-[13px] items-center">
            <IconStrip items={[':', 'layers']} />
            <Picker
              label="Layer"
              value="COTAS"
              className={`w-[113px] ${barPicker}`}
              lead={
                <svg viewBox="0 0 40 9" className="ml-px h-[9px] w-10 shrink-0">
                  <circle cx="4" cy="3.500" r="2.500" fill="#f2dc1f" /><path d="M3 6h2v2H3z" fill="#777" />
                  <circle cx="13" cy="4.500" r="2.500" fill="#e8dd33" stroke="#8da012" />
                  <path d="M18 2h5v5h-5z" fill="#e3e3e3" />
                  <path d="M26 4h4v4h-4z" fill="#222" /><path d="M29 4V2h3v2" stroke="#333" fill="none" />
                  <path d="M34.500 2h5v6h-5z" fill="#e00000" />
                </svg>
              }
            />
            <IconStrip items={['layerPink', 'layerGreen', 'layerBlue']} />
            <span className="w-[5px]" />
            <Grip />
            <Picker label="Color" value="Red" className={`w-[70px] ${barPicker}`} lead={<span className="ml-px h-[5px] w-[14px] bg-red-600" />} />
            <Sep />
            <Picker label="Linetype" value="Continuous" className={`w-[94px] ${barPicker}`} lead={<span className="ml-[2px] w-[40px] border-t border-[#555]" />} />
            <Sep />
            <Picker label="Lineweight" value="BYLAYER" className={`w-[80px] ${barPicker}`} lead={<span className="ml-[2px] w-[38px] border-t border-[#555]" />} />
            <Sep />
            <Picker label="Plot style" value="BYCOLOR" disabled className="w-[48px] border-[#c9c9c9] bg-[#bdbdbd] text-[#888]" />
          </div>
          <div className="flex">
            <div className="flex h-[205px] w-[9px] shrink-0 flex-col items-center justify-between pt-2">
              {drawTools.map((t, i) => <button key={i} aria-label={t} className="flex h-[10px] items-center overflow-hidden"><Glyph name={t} size="size-[9px]" /></button>)}
            </div>
            <PropertiesPanel />
            <div className="flex min-w-0 flex-1 flex-col border-l-[3px] border-[#7b7b7b]">
              <div className="flex h-[10px] items-end border-y border-[#8a8a8a] bg-[#5a5a5a] pl-2 text-[5px] leading-[8px] whitespace-nowrap text-[#ccc]">
                <button className="border-l border-[#888] px-1">6268Iown.DWG</button>
                <button className="border-l border-[#888] px-1">08.06.24_2713 ARQ-006.D. 4º PISO.dwg</button>
                <button className="border-l border-[#888] px-1">3d with xref.dwg</button>
                <button className="bg-white px-1 font-bold text-[#222] [clip-path:polygon(4px_0,calc(100%-4px)_0,100%_100%,0_100%)]">CASA DE PLAYA (ARQUITECTURA).dwg</button>
              </div>
              <Drawing />
              <div className="flex h-2 items-center gap-px bg-[#e2e2e2] text-[5px] leading-[8px] text-[#222]">
                {['|◀', '◀', '▶', '▶|'].map((t) => <button key={t} className="h-[7px] w-[7px] border border-[#bbb] bg-[#eee] text-[4px] leading-[5px]">{t}</button>)}
                <button className="ml-[2px] bg-white px-[2px] text-[6px] font-bold">Model /</button>
                <button className="text-[6px]">Layout1 /</button>
              </div>
              <div className="h-[3px] bg-[#7b7b7b]" />
              <div className="flex h-[29px] flex-col border-l-[3px] border-[#606060] bg-white font-['Liberation_Mono',monospace] text-[6px] leading-[6px] text-[#444]">
                <p className="pl-px">Select entity:</p>
                <p className="pl-px">Command: '_.ZOOM</p>
                <p className="overflow-hidden pl-px whitespace-nowrap">Specify corner of window, enter a scale factor (nX or nXP), or [[Ex/oUt/All</p>
                <label className="mt-auto flex h-[9px] items-center border-t border-[#999] pl-px">
                  Command:&nbsp;
                  <input defaultValue="_BHATCH" className="h-[8px] min-w-0 flex-1 bg-transparent leading-[8px] outline-none" />
                </label>
              </div>
            </div>
            <div className="flex w-[13px] shrink-0 flex-col items-center border-l border-[#777] pt-2">
              <div className="flex h-[188px] flex-col justify-between">
                {editTools.map((t, i) => <button key={i} aria-label={t} className="flex h-[10px] items-center"><Glyph name={t} size="size-[8px]" /></button>)}
              </div>
              <span className="mt-[7px] mb-[2px] w-2 border-t border-[#999]" />
              {orderTools.map((t, i) => <button key={i} aria-label={t} className="flex h-[10px] items-center"><Glyph name={t} size="size-[8px]" /></button>)}
              <span className="my-[2px] w-2 border-t border-[#999]" />
              <button aria-label="copy" className="flex h-[11px] items-center"><Glyph name="copy" size="size-[8px]" /></button>
              <button aria-label="nodes" className="flex h-[11px] items-center"><Glyph name="nodes" size="size-[8px]" /></button>
            </div>
          </div>
          <div className="flex h-[13px] items-center">
            <IconStrip items={[':', 'check', 'tree', '|', 'solidPink', 'bars', 'bomb', '|', 'bars', 'bars', 'solid', 'solid', '|', 'solidPink', '|', 'solidGold', 'solidGold', '|', 'solid', 'solid', '|', 'solidRed', 'solid', '|', 'solidGold', 'solidGold', '|', 'dark', 'wand']} />
            <span className="w-[7px]" />
            <IconStrip items={[':', 'globe', 'calendar', 'redPage', 'help']} />
          </div>
          <footer className="flex h-[10px] items-center bg-[#303030] bg-linear-to-b from-[#3c4353] to-[#2b2b2b] to-40% text-[5px] leading-[10px] text-[#ddd]">
            <span className="flex-1 pl-px">Ready</span>
            <span className="border-l border-[#555] pr-5 pl-[6px]">219.5039,58.1671,0</span>
            <div className="flex gap-[3px]">
              {modes.map(([m, on]) => <button key={m} className={on ? 'text-[#eee]' : 'text-[#777]'}>{m}</button>)}
            </div>
            <div className="flex items-center gap-[3px] pr-px pl-[4px]">
              <svg viewBox="0 0 6 7" className="h-[7px] w-[6px]"><path d="M3 0v4L0 7M3 4l3 3M3 0v7" stroke="#ddd" fill="none" /></svg>
              <span>1:1</span>
              <svg viewBox="0 0 6 7" className="h-[7px] w-[6px]"><path d="M3 1v3L0 7M3 4l3 3" stroke="#eee" fill="none" /><path d="M3 0h3v3H3z" fill="#f1b13a" /></svg>
              <svg viewBox="0 0 6 7" className="h-[7px] w-[6px]"><path d="M1 0l2 4-3 3M3 4l3 3" stroke="#eee" fill="none" /></svg>
              <svg viewBox="0 0 8 8" className="size-2"><circle cx="4" cy="4" r="4" fill="#3da84b" /><path d="M2 4l2 2 3-3" stroke="#fff" fill="none" /></svg>
            </div>
          </footer>
          <BoundaryHatch />
        </main>

        <div dir="rtl" className="absolute top-[37px] right-0 flex h-[41px] w-[186px] items-center gap-[7px] bg-linear-to-r from-white to-[#c5c7c9] pr-1">
          <Chevrons className="h-[31px] w-[22px] shrink-0" />
          <span className="font-['DejaVu_Sans',sans-serif] text-[28px] leading-[40px] font-bold whitespace-nowrap text-[#6d6e70]">آســـیادےال</span>
        </div>

        <div dir="rtl" className="absolute top-[402px] left-0 flex h-[42px] w-[268px] items-center gap-[4px] rounded-r-[20px] bg-linear-to-r from-[#d0d0d0]/90 via-[#8a8a8a]/80 to-[#484848]/90 pr-[10px]">
          <Chevrons className="h-[31px] w-[23px] shrink-0" />
          <span className="font-['DejaVu_Sans',sans-serif] text-[19px] leading-[40px] whitespace-nowrap text-[#505050]">
            <span className="text-white">نخستین</span> شبکه اجتماعی دانلود
          </span>
        </div>
      </div>
    </div>
  );
}
